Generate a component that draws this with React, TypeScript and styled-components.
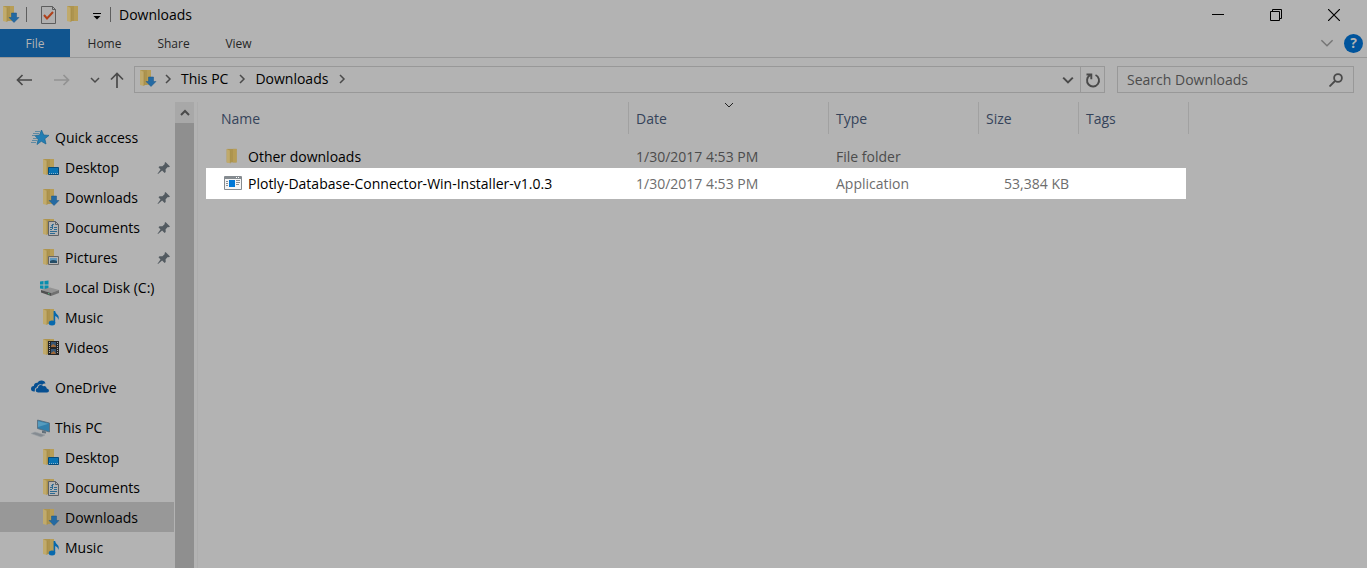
import React from "react";
import styled, { createGlobalStyle } from "styled-components";

const c = {
  bg: "#b3b3b3",
  line: "#989898",
  faint: "#a1a1a1",
  text: "#000000",
  muted: "#4c4c4c",
  head: "#35435a",
  glyph: "#4a4a4a",
};

const GlobalStyle = createGlobalStyle`
  * { box-sizing: border-box; }
  body { margin: 0; background: ${c.bg}; color: ${c.text}; font-family: "Open Sans", "Noto Sans", sans-serif; font-size: 14px; line-height: 20px; }
  button, input { font: inherit; color: inherit; }
  svg { display: block; flex: none; }
`;

const Window = styled.div`
  display: flex;
  flex-direction: column;
  height: 100vh;
  overflow: hidden;
`;

const PlainButton = styled.button`
  display: flex;
  align-items: center;
  justify-content: center;
  padding: 0;
  border: 0;
  background: none;
`;

const TitleBar = styled.header`
  display: flex;
  align-items: center;
  height: 29px;
  flex: none;
`;

const QuickTools = styled.div`
  display: flex;
  align-items: center;
  gap: 6px;
`;

const Divider = styled.span<{ $gap: number }>`
  width: 1px;
  height: 15px;
  margin: 0 ${(p) => p.$gap}px 0 6px;
  background: #5e5e5e;
`;

const Title = styled.h1`
  margin: 0;
  font-size: 14px;
  line-height: 20px;
  font-weight: 400;
`;

const Controls = styled.div`
  display: flex;
  margin-left: auto;
  padding-right: 4px;
`;

const ControlButton = styled(PlainButton)`
  width: 58px;
  height: 28px;
`;

const Ribbon = styled.nav`
  display: flex;
  height: 29px;
  flex: none;
  border-bottom: 1px solid ${c.line};
  font-size: 12px;
  line-height: 28px;
`;

const Tab = styled.button<{ $file?: boolean; $width: number }>`
  width: ${(p) => p.$width}px;
  height: 28px;
  padding: 1px 0 0;
  border: 0;
  text-align: center;
  background: ${(p) => (p.$file ? "#11558f" : "none")};
  color: ${(p) => (p.$file ? "#b3b3b3" : "#262626")};
`;

const RibbonEnd = styled.div`
  display: flex;
  align-items: center;
  gap: 10px;
  margin-left: auto;
  padding-right: 4px;
`;

const HelpButton = styled(PlainButton)`
  width: 19px;
  height: 19px;
  border-radius: 50%;
  background: #00549c;
  color: ${c.bg};
  font-size: 14px;
  font-weight: 700;
  line-height: 18px;
`;

const NavRow = styled.div`
  display: flex;
  align-items: center;
  flex: none;
  padding: 8px 13px 9px 14px;
`;

const NavButtons = styled.div`
  display: flex;
  align-items: center;
  width: 120px;
`;

const NavButton = styled(PlainButton)<{ $width: number }>`
  width: ${(p) => p.$width}px;
  height: 26px;
`;

const AddressBar = styled.div`
  display: flex;
  flex: 1;
  align-items: center;
  height: 27px;
  border: 1px solid ${c.line};
  padding: 0 0 1px 2px;
`;

const Crumb = styled.a`
  color: inherit;
  text-decoration: none;
  padding: 0 9px 0 8px;
`;

const CrumbIcon = styled.span`
  margin-right: 6px;
`;

const AddressEnd = styled.div`
  display: flex;
  align-self: flex-start;
  margin-left: auto;
  height: 25px;
`;

const AddressButton = styled(PlainButton)<{ $line?: boolean }>`
  width: 24px;
  border-left: ${(p) => (p.$line ? `1px solid ${c.line}` : "0")};
`;

const SearchBox = styled.label`
  display: flex;
  align-items: center;
  width: 237px;
  height: 27px;
  margin-left: 12px;
  padding: 0 10px 0 9px;
  border: 1px solid ${c.line};
`;

const SearchInput = styled.input`
  flex: 1;
  min-width: 0;
  padding: 0;
  border: 0;
  outline: 0;
  background: none;
  &::placeholder { color: ${c.muted}; opacity: 1; }
`;

const Body = styled.div`
  display: flex;
  flex: 1;
  min-height: 0;
`;

const Sidebar = styled.nav`
  width: 175px;
  flex: none;
  padding: 20px 1px 0 0;
  overflow: hidden;
`;

const Group = styled.ul`
  list-style: none;
  margin: 0 0 10px;
  padding: 0;
`;

const Item = styled.a<{ $root?: boolean; $selected?: boolean }>`
  display: flex;
  align-items: center;
  gap: 5px;
  height: 30px;
  padding: 1px 3px 0 ${(p) => (p.$root ? 30 : 40)}px;
  background: ${(p) => (p.$selected ? c.line : "none")};
  color: inherit;
  text-decoration: none;
  white-space: nowrap;
`;

const PinSlot = styled.span`
  margin-left: auto;
`;

const Scrollbar = styled.div`
  display: flex;
  flex-direction: column;
  width: 19px;
  flex: none;
  background: #a8a8a8;
`;

const ScrollUp = styled(PlainButton)`
  height: 21px;
`;

const Thumb = styled.div`
  flex: 1;
  background: #8f8f8f;
`;

const FilePane = styled.main`
  flex: 1;
  min-width: 0;
  margin-left: 3px;
  padding-left: 8px;
  border-left: 1px solid #adadad;
`;

const FileTable = styled.table`
  table-layout: fixed;
  width: 983px;
  border-collapse: collapse;
  white-space: nowrap;
`;

const HeadCell = styled.th`
  padding: 0 0 11px;
  font-weight: 400;
`;

const SortButton = styled.button<{ $first?: boolean }>`
  position: relative;
  display: block;
  width: 100%;
  height: 32px;
  padding: 2px 0 0 ${(p) => (p.$first ? 15 : 7)}px;
  border: 0;
  border-right: 1px solid ${c.faint};
  background: none;
  color: ${c.head};
  text-align: left;
`;

const SortMark = styled.span`
  position: absolute;
  top: -2px;
  left: 50%;
  margin-left: -5px;
`;

const Row = styled.tr<{ $active?: boolean }>`
  height: ${(p) => (p.$active ? 31 : 23)}px;
  color: ${(p) => (p.$active ? "#6d6d6d" : c.muted)};
  background: ${(p) => (p.$active ? "linear-gradient(to right, #fff calc(100% - 3px), transparent 0)" : "none")};
`;

const Cell = styled.td<{ $end?: boolean }>`
  padding: 0 ${(p) => (p.$end ? 10 : 0)}px 0 7px;
  text-align: ${(p) => (p.$end ? "right" : "left")};
`;

const FileName = styled.div`
  display: flex;
  align-items: center;
  gap: 6px;
  padding-left: 11px;
  color: ${c.text};
`;

type Kind =
  | "folder" | "desktop" | "downloads" | "documents" | "pictures" | "music" | "videos"
  | "star" | "disk" | "cloud" | "pc";

const Folder = () => (
  <>
    <path d="M3 1h11v15H3z" fill="#ad944f" />
    <path d="M10 1h4v15h-4z" fill="#b79d56" />
    <path d="M3 1l4 2v14l-4-1z" fill="#c0aa6c" />
    <path d="M7 3v14" stroke="#a1883f" strokeWidth=".6" />
  </>
);

const overlays: Record<Kind, React.ReactNode> = {
  folder: null,
  desktop: (
    <>
      <path d="M8.500 9.500h10v7h-10z" fill="#0872b3" stroke="#074a78" />
      <path d="M9 15.500h9" stroke="#8fb4c8" strokeDasharray="1 1" />
    </>
  ),
  downloads: <path d="M11.500 8h5v4.500H19L14 17.500 9 12.500h2.500z" fill="#246aa3" stroke="#1b5788" strokeWidth=".5" />,
  documents: (
    <>
      <path d="M8.500 3.500h7l3 3v11h-10z" fill="#b3b3b3" stroke="#5d6166" />
      <path d="M15.500 3.500v3h3" fill="none" stroke="#5d6166" />
      <path d="M10 9.500h2M14 9.500h3M10 11.500h2M14 11.500h3M10 13.500h7M10 15.500h5M11 8l3-2M12.500 6v5" stroke="#2c6a93" />
    </>
  ),
  pictures: (
    <>
      <path d="M8.500 8.500h10v8h-10z" fill="#b3b3b3" stroke="#666" />
      <path d="M10 10h7v5h-7z" fill="#6098be" />
      <path d="M10 13q3-2 7 0v2h-7z" fill="#254c65" />
    </>
  ),
  music: (
    <>
      <ellipse cx="12" cy="15" rx="3.300" ry="2.500" fill="#0869ad" />
      <path d="M13.600 3h1.500q.3 2 2.300 3.700 2.200 2 .8 5.300 0-3-3-4v7h-1.600z" fill="#0869ad" />
    </>
  ),
  videos: (
    <>
      <path d="M8 3h11v14H8z" fill="#252525" />
      <path d="M9.500 4v12M17.500 4v12" stroke="#aaa" strokeDasharray="1 1" />
      <path d="M11 4h5v5h-5zM11 11h5v5h-5z" fill="#365574" />
      <path d="M11 8l2-2 3 2v1h-5zM11 15l3-2 2 3h-5z" fill="#a16a39" />
    </>
  ),
  star: (
    <>
      <path d="M11.500 2l2.200 5 5.300.4-4.200 3.400L16 16l-4.700-2.700L7 16.500l1.200-5.300L4.800 7.500l4.700-.3z" fill="#237eb3" stroke="#176492" strokeWidth=".7" />
      <path d="M5 3.500h5M3 5.500h6M2 7.500h4M3 10.500h4M2 12.500h5M1 14.500h5" stroke="#487f9e" strokeWidth=".8" />
    </>
  ),
  disk: (
    <>
      <path d="M0 3.500l3.500-.5v3.500H0zM4.500 3L8.500 2.400v4.100h-4zM0 7.500h3.500V11L0 10.500zM4.500 7.500h4v4L4.500 11z" fill="#078eae" />
      <path d="M1 12l9-2.500 9 2.500-8 3z" fill="#939393" />
      <path d="M1 12l10 3v3L1 14.500z" fill="#505050" />
      <path d="M11 15l8-3v3l-8 3z" fill="#707070" />
      <path d="M8 15.500l1.500.5" stroke="#51c080" />
    </>
  ),
  cloud: (
    <>
      <path d="M4 13.500Q1 13.500 1 10.800 1 8.300 3.800 8 4.300 4.600 7.500 4.800 9 2 12 2.500q2.800.2 3.600 3-2-.5-3.400 1.200Q8 5.300 7 9.300q-2.500.3-2.200 4.200z" fill="#064f91" />
      <path d="M8 14.500q-2.500-.2-2.300-2.300Q5.800 10 8 10q.2-3 2.700-3 1.600 0 2.400 1.200 3.200-1 3.700 2.400 2.200.3 2.200 2.200 0 1.700-2 1.700z" fill="#064f91" />
    </>
  ),
  pc: (
    <>
      <path d="M7.500 2l12 3v9l-12-3.500z" fill="#327fab" stroke="#576978" strokeWidth=".8" />
      <path d="M8 3.300l10.500 2.500L8 9z" fill="#559bbe" />
      <path d="M12 12.500l4 1v2l-4-.5z" fill="#64717b" />
      <path d="M1 15.500l4-1.500 10 3-4 2z" fill="#858b91" stroke="#999fa4" strokeWidth=".6" />
    </>
  ),
};

const noFolder: Kind[] = ["star", "disk", "cloud", "pc"];

const Icon = ({ kind, size = 20 }: { kind: Kind; size?: number }) => (
  <svg width={size} height={size} viewBox="0 0 20 20" aria-hidden="true">
    {!noFolder.includes(kind) && <Folder />}
    {overlays[kind]}
  </svg>
);

const Pin = () => (
  <svg width="14" height="14" viewBox="0 0 14 14" aria-hidden="true">
    <path d="M8.500 1L13 5.500l-1.300.7-.9-.2-2.200 2.300.1 2.700-1.100 1-2.500-2.500L1 13l-.5-.3 3-4.200L1.500 6.200l1-1 2.900.1L7.800 3 7.600 2z" fill="#535b61" />
  </svg>
);

const Chevron = ({ dir, color = c.glyph, width = 10, weight = 1.5 }: { dir: "down" | "right" | "up"; color?: string; width?: number; weight?: number }) => (
  <svg width={width} height={width} viewBox="0 0 10 10" fill="none" stroke={color} strokeWidth={weight} aria-hidden="true">
    <path d={{ down: "M1 3l4 4 4-4", right: "M3 1l4 4-4 4", up: "M1 7l4-4 4 4" }[dir]} />
  </svg>
);

const AppIcon = () => (
  <svg width="18" height="20" viewBox="0 0 18 20" aria-hidden="true">
    <path d="M.5 2.500h17v13H.5z" fill="#f5f5f5" stroke="#858b90" />
    <path d="M1 3h16v2H1z" fill="#858b90" />
    <path d="M12 3.500h4" stroke="#fff" strokeDasharray="1 1" />
    <path d="M5 6h6v7H5z" fill="#0078d7" />
    <path d="M2 7.500h2M2 9.500h2M2 11.500h2M12 6.500h4M12 8.500h4M12 10.500h3" stroke="#8b8f93" />
  </svg>
);

type Entry = { label: string; kind: Kind; pinned?: boolean; selected?: boolean; root?: boolean };

const groups: Entry[][] = [
  [
    { label: "Quick access", kind: "star", root: true },
    { label: "Desktop", kind: "desktop", pinned: true },
    { label: "Downloads", kind: "downloads", pinned: true },
    { label: "Documents", kind: "documents", pinned: true },
    { label: "Pictures", kind: "pictures", pinned: true },
    { label: "Local Disk (C:)", kind: "disk" },
    { label: "Music", kind: "music" },
    { label: "Videos", kind: "videos" },
  ],
  [{ label: "OneDrive", kind: "cloud", root: true }],
  [
    { label: "This PC", kind: "pc", root: true },
    { label: "Desktop", kind: "desktop" },
    { label: "Documents", kind: "documents" },
    { label: "Downloads", kind: "downloads", selected: true },
    { label: "Music", kind: "music" },
  ],
];

const columns = [
  { label: "Name", width: 423 },
  { label: "Date", width: 200 },
  { label: "Type", width: 150 },
  { label: "Size", width: 100 },
  { label: "Tags", width: 110 },
];

const files = [
  { name: "Other downloads", date: "1/30/2017 4:53 PM", type: "File folder", size: "", app: false },
  { name: "Plotly-Database-Connector-Win-Installer-v1.0.3", date: "1/30/2017 4:53 PM", type: "Application", size: "53,384 KB", app: true },
];

export default function App() {
  return (
    <Window>
      <GlobalStyle />
      <TitleBar>
        <Icon kind="downloads" />
        <Divider $gap={13} />
        <QuickTools>
          <PlainButton aria-label="Properties">
            <svg width="18" height="20" viewBox="0 0 18 20">
              <path d="M1.500 1.500h11l3 3v14h-14z" fill="#b0b0b0" stroke="#5d5d5d" />
              <path d="M12.500 1.500v3h3" fill="none" stroke="#5d5d5d" />
              <path d="M4 10l3 3.500L13 7" fill="none" stroke="#b0401a" strokeWidth="2" />
            </svg>
          </PlainButton>
          <PlainButton aria-label="New folder"><Icon kind="folder" /></PlainButton>
          <PlainButton aria-label="Customize toolbar">
            <svg width="14" height="20" viewBox="0 0 14 20">
              <path d="M3 8.500h8" stroke="#000" />
              <path d="M3.500 11h7L7 14.500z" fill="#000" />
            </svg>
          </PlainButton>
        </QuickTools>
        <Divider $gap={8} />
        <Title>Downloads</Title>
        <Controls>
          <ControlButton aria-label="Minimize">
            <svg width="12" height="12" viewBox="0 0 12 12"><path d="M0 5.500h12" stroke="#000" /></svg>
          </ControlButton>
          <ControlButton aria-label="Restore">
            <svg width="12" height="12" viewBox="0 0 12 12" fill="none" stroke="#000"><path d="M.5 2.500h9v9h-9zM2.500 2.500v-2h9v9h-2" /></svg>
          </ControlButton>
          <ControlButton aria-label="Close">
            <svg width="12" height="12" viewBox="0 0 12 12"><path d="M0 0l12 12M12 0L0 12" stroke="#000" strokeWidth="1.200" /></svg>
          </ControlButton>
        </Controls>
      </TitleBar>
      <Ribbon>
        <Tab $file $width={70}>File</Tab>
        <Tab $width={69}>Home</Tab>
        <Tab $width={69}>Share</Tab>
        <Tab $width={61}>View</Tab>
        <RibbonEnd>
          <PlainButton aria-label="Expand ribbon"><Chevron dir="down" color="#757575" width={14} weight={1} /></PlainButton>
          <HelpButton aria-label="Help">?</HelpButton>
        </RibbonEnd>
      </Ribbon>
      <NavRow>
        <NavButtons>
          <NavButton $width={20} aria-label="Back">
            <svg width="16" height="12" viewBox="0 0 16 12" fill="none" stroke={c.glyph} strokeWidth="1.700"><path d="M16 6H1.500M6.500 1l-5 5 5 5" /></svg>
          </NavButton>
          <NavButton $width={56} aria-label="Forward" disabled>
            <svg width="16" height="12" viewBox="0 0 16 12" fill="none" stroke="#929292" strokeWidth="1.700"><path d="M0 6h14.500M9.500 1l5 5-5 5" /></svg>
          </NavButton>
          <NavButton $width={10} aria-label="Recent locations"><Chevron dir="down" /></NavButton>
          <NavButton $width={34} aria-label="Up">
            <svg width="14" height="16" viewBox="0 0 14 16" fill="none" stroke={c.glyph} strokeWidth="1.700"><path d="M7 16V1.500M1 7.500l6-6 6 6" /></svg>
          </NavButton>
        </NavButtons>
        <AddressBar>
          <CrumbIcon><Icon kind="downloads" /></CrumbIcon>
          <Chevron dir="right" />
          <Crumb href="#pc">This PC</Crumb>
          <Chevron dir="right" />
          <Crumb href="#downloads">Downloads</Crumb>
          <Chevron dir="right" />
          <AddressEnd>
            <AddressButton aria-label="Previous locations"><Chevron dir="down" width={12} weight={1.700} /></AddressButton>
            <AddressButton $line aria-label="Refresh">
              <svg width="16" height="16" viewBox="0 0 16 16" fill="none" stroke={c.glyph} strokeWidth="1.900"><path d="M10.500 3a6 6 0 1 1-5.500.3M1.500 2.500h4.800v4.800" /></svg>
            </AddressButton>
          </AddressEnd>
        </AddressBar>
        <SearchBox>
          <SearchInput type="text" aria-label="Search Downloads" placeholder="Search Downloads" />
          <svg width="14" height="14" viewBox="0 0 14 14" fill="none" stroke={c.glyph} strokeWidth="1.800"><circle cx="9" cy="5" r="3.900" /><path d="M6 8l-5.500 5.500" /></svg>
        </SearchBox>
      </NavRow>
      <Body>
        <Sidebar aria-label="Folders">
          {groups.map((group) => (
            <Group key={group[0].label}>
              {group.map((e) => (
                <li key={e.label}>
                  <Item href="#folder" $root={e.root} $selected={e.selected}>
                    <Icon kind={e.kind} />
                    {e.label}
                    {e.pinned && <PinSlot><Pin /></PinSlot>}
                  </Item>
                </li>
              ))}
            </Group>
          ))}
        </Sidebar>
        <Scrollbar>
          <ScrollUp aria-label="Scroll up"><Chevron dir="up" weight={2} /></ScrollUp>
          <Thumb />
        </Scrollbar>
        <FilePane>
          <FileTable>
            <colgroup>{columns.map((col) => <col key={col.label} width={col.width} />)}</colgroup>
            <thead>
              <tr>
                {columns.map((col, i) => (
                  <HeadCell key={col.label} scope="col">
                    <SortButton $first={i === 0}>
                      {col.label}
                      {col.label === "Date" && <SortMark><Chevron dir="down" weight={1} color="#222" /></SortMark>}
                    </SortButton>
                  </HeadCell>
                ))}
              </tr>
            </thead>
            <tbody>
              {files.map((f) => (
                <Row key={f.name} $active={f.app}>
                  <Cell>
                    <FileName>
                      {f.app ? <AppIcon /> : <Icon kind="folder" size={18} />}
                      {f.name}
                    </FileName>
                  </Cell>
                  <Cell>{f.date}</Cell>
                  <Cell>{f.type}</Cell>
                  <Cell $end>{f.size}</Cell>
                  <Cell />
                </Row>
              ))}
            </tbody>
          </FileTable>
        </FilePane>
      </Body>
    </Window>
  );
}
